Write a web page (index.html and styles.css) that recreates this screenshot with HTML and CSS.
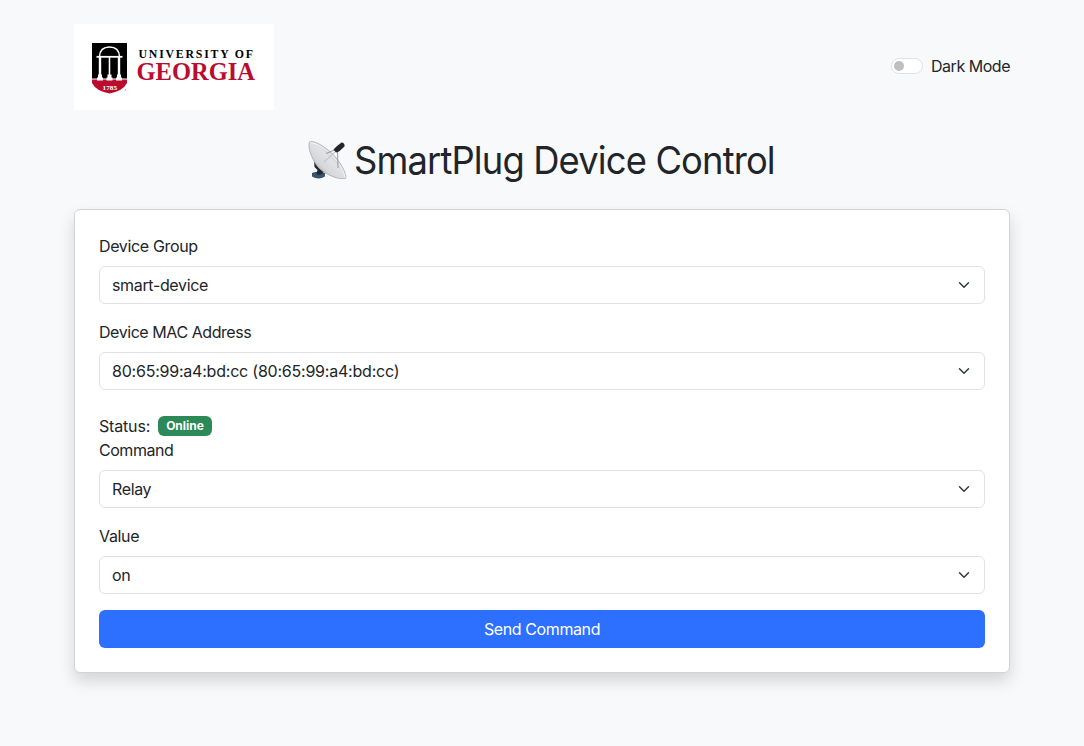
FILE: index.html
```html
<!DOCTYPE html>
<html lang="en">
<head>
<meta charset="utf-8">
<title>SmartPlug Device Control</title>
<link rel="stylesheet" href="styles.css">
</head>
<body>
<main class="container">
  <header class="topbar">
    <svg class="logo" viewBox="0 0 200 86" role="img" aria-label="University of Georgia">
      <rect width="200" height="86" fill="#fff"/>
      <path d="M18 19h35v40q-4 8-17.500 10.500Q22 67 18 59z" fill="#ba0c2f"/>
      <path d="M18 19h35v36H18z" fill="#000"/>
      <path d="M18 55h35" stroke="#fff" stroke-width="1"/>
      <g fill="none" stroke="#fff">
        <path d="M25.500 32.500Q26 23 35.500 23T45.500 32.500" stroke-width="1.400"/>
        <path d="M22.500 32.800h26" stroke-width="1.800"/>
        <path d="M26 33v20M45 33v20" stroke-width="2.400"/>
        <path d="M35.500 33v20" stroke-width="1.600"/>
      </g>
      <path d="M23 56.500v-3h1v-3h4v3h1v3zM32.500 56.500v-3h1v-3h4v3h1v3zM42 56.500v-3h1v-3h4v3h1v3z" fill="#fff"/>
      <text class="logo-year" x="28.500" y="65.500" textLength="14.500" lengthAdjust="spacingAndGlyphs">1785</text>
      <circle cx="51.500" cy="66" r=".7" fill="#999"/>
      <text class="logo-small" x="64.500" y="34" textLength="114.500" lengthAdjust="spacing">UNIVERSITY OF</text>
      <text class="logo-large" x="62.500" y="55.700" textLength="118.500" lengthAdjust="spacingAndGlyphs">GEORGIA</text>
    </svg>
    <label class="switch"><span class="switch-track"></span><span class="switch-label">Dark Mode</span></label>
  </header>

  <h1 class="title">
    <svg class="dish" viewBox="0 0 39 39" aria-hidden="true">
      <defs>
        <linearGradient id="bowl" x1=".2" y1=".8" x2=".7" y2=".3">
          <stop offset="0" stop-color="#a9aaae"/><stop offset=".3" stop-color="#d6d7da"/><stop offset=".7" stop-color="#e2e2e5"/><stop offset="1" stop-color="#c9cace"/>
        </linearGradient>
      </defs>
      <path d="M4 32q6.500-3 13 0v3.500q-6.500 4-13 0z" fill="#39536f"/>
      <path d="M6 20l5 3 6 6-3 4q-3 1.500-5.500 0l1-4-3-3z" fill="#25282f"/>
      <path d="M1.500 1C5-1 15 4 23.700 12.200S38.500 32 37.800 37.300C30 39 19 34 12 28S-1 6 1.500 1z" fill="url(#bowl)" stroke="#a9aaaf" stroke-width=".8"/>
      <path d="M2 2C6 1 14 5 22.500 13S36 30 37 36.500" fill="none" stroke="#f4f4f6" stroke-width="1"/>
      <path d="M18 12.500L29 8M30 27L29.500 9" fill="none" stroke="#8f9096" stroke-width=".9"/>
      <path d="M16 21L29 9" stroke="#b8b8be" stroke-width="1"/>
      <path d="M25.500 8.500L29 5l4.500-3.500q3.500.3 3 4L31 10.500l-3 1z" fill="#25262a"/>
    </svg>
    <span class="title-text">SmartPlug Device Control</span>
  </h1>

  <form class="card">
    <div class="field"><span class="label">Device Group</span>
      <div class="select"><span>smart-device</span><svg class="chevron" viewBox="0 0 16 16"><path d="m2 5 6 6 6-6"/></svg></div></div>
    <div class="field"><span class="label label-mac">Device MAC Address</span>
      <div class="select"><span class="address">80:65:99:a4:bd:cc (80:65:99:a4:bd:cc)</span><svg class="chevron" viewBox="0 0 16 16"><path d="m2 5 6 6 6-6"/></svg></div></div>
    <div class="status"><span class="status-label">Status:</span><span class="badge">Online</span></div>
    <div class="field"><span class="label label-command">Command</span>
      <div class="select"><span>Relay</span><svg class="chevron" viewBox="0 0 16 16"><path d="m2 5 6 6 6-6"/></svg></div></div>
    <div class="field"><span class="label">Value</span>
      <div class="select"><span>on</span><svg class="chevron" viewBox="0 0 16 16"><path d="m2 5 6 6 6-6"/></svg></div></div>
    <button class="send" type="button">Send Command</button>
  </form>
</main>
</body>
</html>
```

FILE: styles.css
```css
* { box-sizing: border-box; }
body {
  margin: 0;
  min-height: 100vh;
  background: #f8f9fa;
  color: #212529;
  font: 400 16px/24px Inter, sans-serif;
  letter-spacing: -0.35px;
}
.container { width: 936px; min-height: 100vh; margin: 0 auto; padding-top: 24px; }
.topbar { display: flex; justify-content: space-between; align-items: center; height: 86px; }
.logo { display: block; width: 200px; height: 86px; }
.logo text { font-family: "Liberation Serif", serif; font-weight: 700; letter-spacing: 0; }
.logo-year { font-size: 7px; fill: #fff; }
.logo-small { font-size: 11.8px; fill: #000; }
.logo-large { font-size: 26px; fill: #ba0c2f; }
.switch { display: flex; align-items: center; gap: 8px; padding-bottom: 2px; letter-spacing: -0.48px; }
.switch-track { width: 32px; height: 16px; padding: 2px; border: 1px solid #dee2e6; border-radius: 8px; background: #fff; }
.switch-track::before { content: ""; display: block; width: 10px; height: 10px; border-radius: 50%; background: #bfbfbf; }
.title { display: flex; justify-content: center; align-items: center; gap: 7px; margin: 26px 0 25px; height: 48px; font-size: 38.5px; line-height: 48px; font-weight: 400; letter-spacing: -0.9px; }
.title-text { width: 422px; white-space: nowrap; transform: scaleX(.944); transform-origin: left center; }
.dish { width: 39px; height: 39px; }
.card { padding: 24px; border: 1px solid #d3d4d5; border-radius: 6px; background: #fff; box-shadow: 0 8px 16px rgba(0, 0, 0, .15); }
.field { margin-bottom: 16px; }
.label { display: block; margin-bottom: 8px; }
.label-mac { letter-spacing: -0.44px; }
.label-command { letter-spacing: -0.46px; }
.address { letter-spacing: -0.22px; }
.select { display: flex; align-items: center; justify-content: space-between; height: 38px; padding: 0 12px; border: 1px solid #dee2e6; border-radius: 6px; }
.chevron { width: 16px; height: 12px; fill: none; stroke: #343a40; stroke-width: 2; stroke-linecap: round; stroke-linejoin: round; }
.status { display: flex; align-items: center; gap: 8px; height: 24px; margin-top: 24px; }
.status-label { letter-spacing: -0.17px; }
.badge { height: 20px; padding: 0 8px; border-radius: 6px; background: #2b8a57; color: #fff; font-size: 12px; line-height: 20px; font-weight: 700; letter-spacing: 0; }
.send { display: block; width: 100%; height: 38px; padding: 0; border: 0; border-radius: 6px; background: #2d6fff; color: #fff; font: inherit; letter-spacing: -0.4px; }
```
